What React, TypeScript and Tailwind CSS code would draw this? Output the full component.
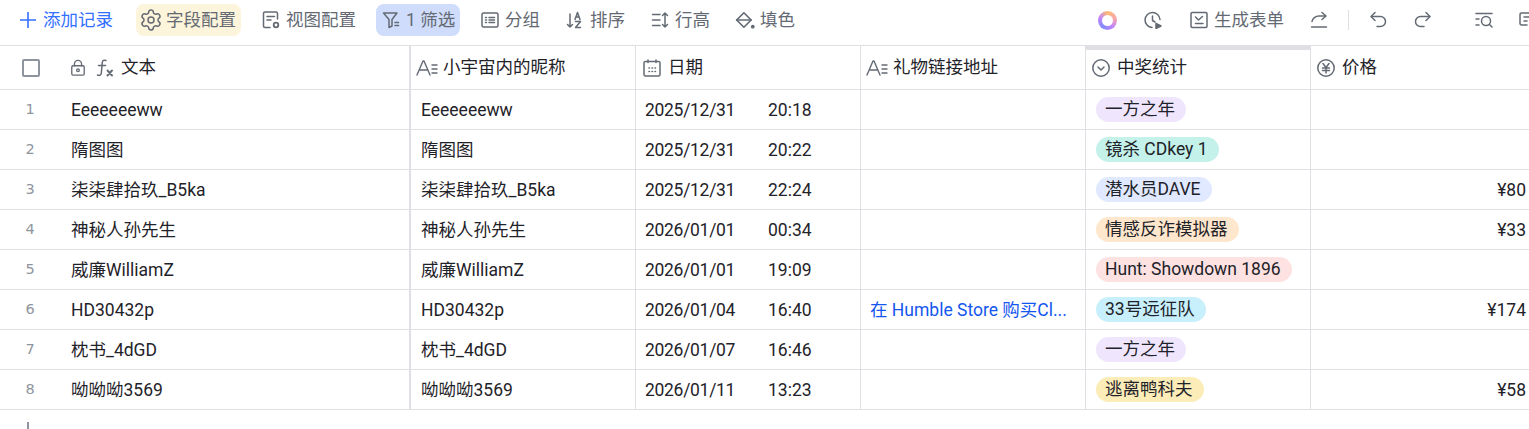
import type { ReactNode } from "react";
import { Settings } from "lucide-react";

type Row = { name: string; date: string; time: string; link?: string; prize: string; pill: string; price?: string };

const ROWS: Row[] = [
  { name: "Eeeeeeeww", date: "2025/12/31", time: "20:18", prize: "一方之年", pill: "bg-[#efe6fe]" },
  { name: "隋图图", date: "2025/12/31", time: "20:22", prize: "镜杀 CDkey 1", pill: "bg-[#c4f2eb]" },
  { name: "柒柒肆拾玖_B5ka", date: "2025/12/31", time: "22:24", prize: "潜水员DAVE", pill: "bg-[#e0e9ff]", price: "¥80" },
  { name: "神秘人孙先生", date: "2026/01/01", time: "00:34", prize: "情感反诈模拟器", pill: "bg-[#fee7cd]", price: "¥33" },
  { name: "威廉WilliamZ", date: "2026/01/01", time: "19:09", prize: "Hunt: Showdown 1896", pill: "bg-[#fee2e2]" },
  { name: "HD30432p", date: "2026/01/04", time: "16:40", link: "在 Humble Store 购买Cl...", prize: "33号远征队", pill: "bg-[#c8effc]", price: "¥174" },
  { name: "枕书_4dGD", date: "2026/01/07", time: "16:46", prize: "一方之年", pill: "bg-[#efe6fe]" },
  { name: "呦呦呦3569", date: "2026/01/11", time: "13:23", prize: "逃离鸭科夫", pill: "bg-[#fcecb8]", price: "¥58" },
];

function Ico({ children, className = "h-[18px] w-[18px]" }: { children: ReactNode; className?: string }) {
  return (
    <svg viewBox="0 0 18 18" fill="none" stroke="#646a73" strokeWidth="1.5" strokeLinecap="round" strokeLinejoin="round" className={`shrink-0 ${className}`}>
      {children}
    </svg>
  );
}

function ToolBtn({ icon, label, className = "" }: { icon: ReactNode; label: string; className?: string }) {
  return (
    <div className={`flex h-8 items-center gap-[6px] rounded-lg px-[6px] text-[#646a73] ${className}`}>
      {icon}
      <span className="whitespace-nowrap">{label}</span>
    </div>
  );
}

const TextFieldIcon = () => (
  <svg viewBox="0 0 22 18" fill="none" stroke="#646a73" strokeWidth="1.4" strokeLinecap="round" strokeLinejoin="round" className="h-[18px] w-[22px] shrink-0">
    <path d="M1 16 7 2h1l6 14M3.500 11h8.500" />
    <path d="M16 6h5M16 10h5M16 14h5" />
  </svg>
);

function App() {
  return (
    <div className="h-[429px] w-[1529px] overflow-hidden bg-white text-[17.5px] text-[#1f2329] [font-family:Roboto,'Noto_Sans_CJK_SC',sans-serif]">
      {/* toolbar */}
      <div className="flex h-[45px] items-start pt-1">
        <div className="flex w-[1085px] shrink-0 items-center">
          <div className="ml-5 mr-[23px] flex h-8 items-center gap-[7px] text-[#3370ff]">
            <svg viewBox="0 0 16 16" fill="none" stroke="#3370ff" strokeWidth="1.600" className="h-4 w-4">
              <path d="M8 0v16M0 8h16" />
            </svg>
            <span>添加记录</span>
          </div>
          <ToolBtn
            className="mr-[15px] w-[105px] bg-[#fdf4dc]"
            icon={<Settings size={24} strokeWidth={1.5} color="#646a73" className="-m-[3px] shrink-0" />}
            label="字段配置"
          />
          <ToolBtn
            className="mr-[14px] w-[106px]"
            icon={
              <Ico>
                <path d="M8 16.500H3A1.500 1.500 0 0 1 1.500 15V2.500A1.500 1.500 0 0 1 3 1h11a1.500 1.500 0 0 1 1.500 1.500V8" />
                <path d="M5 5.500h7.500M5 9h4" />
                <circle cx="14" cy="14" r="2.300" strokeWidth="1.800" />
              </Ico>
            }
            label="视图配置"
          />
          <ToolBtn
            className="mr-[15px] w-[84px] bg-[#cfdcfb]"
            icon={
              <Ico>
                <path d="M1.500 2h13.500L10 8.500V15l-3 1.500v-8z" />
                <path d="M13 11.500h3.500M13 14.500h3.500" />
              </Ico>
            }
            label="1 筛选"
          />
          <ToolBtn
            className="mr-[14px] w-[71px]"
            icon={
              <Ico>
                <rect x="1" y="2" width="16" height="14" rx="1.500" />
                <path d="M4.500 6.500h1M8 6.500h5.500M4.500 9h1M8 9h5.500M4.500 11.500h1M8 11.500h5.500" />
              </Ico>
            }
            label="分组"
          />
          <ToolBtn
            className="mr-[13px] w-[72px]"
            icon={
              <Ico>
                <path d="M4 3v13M1.500 13.500 4 16l2.500-2.500" />
                <path d="M9 8.500 11.500 1.500 14 8.500M10 6h3M9.500 10.500h5L9.500 16.500h5" />
              </Ico>
            }
            label="排序"
          />
          <ToolBtn
            className="mr-3 w-[72px]"
            icon={
              <Ico>
                <path d="M1.500 3.500h7.500M1.500 9h7.500M1.500 14.500h7.500" />
                <path d="M14 2v14M11.500 4.500 14 2l2.500 2.500M11.500 13.500 14 16l2.500-2.500" />
              </Ico>
            }
            label="行高"
          />
          <div className="flex h-8 items-center gap-[5px] px-[6px] text-[#646a73]">
            <Ico className="h-[20px] w-[20px]">
              <path d="M1.500 9 8 2.500 14.500 9 8 15.500z" />
              <path d="M1.500 9h13" />
              <circle cx="16" cy="15" r="1.700" fill="#646a73" stroke="none" />
            </Ico>
            <span>填色</span>
          </div>
        </div>
        <div className="flex h-8 shrink-0 items-center pl-[13px]">
          <div className="h-[19px] w-[19px] rounded-full bg-[conic-gradient(#fdba74,#f9a8a8,#c084fc,#818cf8,#c084fc,#fdba74)] p-1">
            <div className="h-full w-full rounded-full bg-white" />
          </div>
          <div className="ml-[27px]">
            <Ico>
              <path d="M8 16.500A7.500 7.500 0 1 1 16 8.500" />
              <path d="M8.500 5v4.500l2.500 1.500" />
              <path d="M12 12.500l5 2.500-5 2.500z" fill="#646a73" />
            </Ico>
          </div>
          <div className="ml-[28px] flex items-center gap-[6px] text-[#646a73]">
            <Ico>
              <rect x="1" y="1.500" width="16" height="15" rx="1.200" />
              <path d="m5.500 6 3 3 4-3.500M5.500 12.500h7.500" />
            </Ico>
            <span className="whitespace-nowrap">生成表单</span>
          </div>
          <div className="ml-[26px]">
            <Ico>
              <path d="M2 10.500C2.500 7.500 5.500 5 9 5h6.500" />
              <path d="M12 1.500 16 5l-4 3.500" />
              <path d="M1.500 16h15" />
            </Ico>
          </div>
          <div className="ml-5 h-5 w-px bg-[#dee0e3]" />
          <div className="ml-5">
            <Ico>
              <path d="M6 1.500 2 5.500l4 4" />
              <path d="M2.500 5.500h9a5 5 0 0 1 0 10H8" />
            </Ico>
          </div>
          <div className="ml-[27px]">
            <Ico>
              <path d="M12 1.500l4 4-4 4" />
              <path d="M15.500 5.500h-9a5 5 0 0 0 0 10H10" />
            </Ico>
          </div>
          <div className="ml-[43px]">
            <Ico>
              <path d="M1 2.500h16M1 8h3M1 14h3" />
              <circle cx="11" cy="10" r="4.500" />
              <path d="m14.500 13.500 2.500 2.500" />
            </Ico>
          </div>
          <div className="ml-[26px]">
            <Ico>
              <path d="M16 8V3.500A1.500 1.500 0 0 0 14.500 2h-12A1.500 1.500 0 0 0 1 3.500v9A1.500 1.500 0 0 0 2.500 14H8" />
              <path d="M5 6h7M5 10h3" />
            </Ico>
          </div>
        </div>
      </div>

      {/* table */}
      <div className="w-[1536px]">
        <div className="grid h-[45px] grid-cols-[411px_225px_225px_225px_225px_225px] border-y border-[#dee0e3]">
          <div className="flex items-center border-r-2 border-[#dee0e3]">
            <div className="ml-[22px] h-[18px] w-[18px] rounded-[2px] border-2 border-[#8f959e]" />
            <div className="ml-[30px]">
              <Ico className="h-[18px] w-[16px]">
                <rect x="2" y="6.500" width="14" height="10.500" rx="1.500" />
                <path d="M5 6.500V4.500a4 4 0 0 1 8 0v2" />
                <circle cx="9" cy="11.500" r="1.500" />
              </Ico>
            </div>
            <div className="ml-[8px]">
              <svg viewBox="0 0 20 20" fill="none" stroke="#646a73" strokeWidth="1.500" strokeLinecap="round" className="h-5 w-5">
                <path d="M12 2.500c-2-.8-3.500 0-3.700 2L7.300 15c-.2 2-1.700 3-3.800 2" />
                <path d="M4.500 7.500h7" />
                <path d="m13.500 12.500 4.500 5M18 12.500l-4.500 5" strokeWidth="1.900" />
              </svg>
            </div>
            <span className="ml-[7px]">文本</span>
          </div>
          <div className="flex items-center gap-[5px] border-r border-[#dee0e3] pl-[5px]">
            <TextFieldIcon />
            <span className="whitespace-nowrap">小宇宙内的昵称</span>
          </div>
          <div className="flex items-center gap-[7px] border-r border-[#dee0e3] pl-[7px]">
            <Ico>
              <rect x="1" y="2.500" width="16" height="14.500" rx="1.500" />
              <path d="M5 1v2.500M13 1v2.500M6 9h.5M9 9h.5M12 9h.5M6 12.500h.5M9 12.500h.5M12 12.500h.5" />
            </Ico>
            <span>日期</span>
          </div>
          <div className="flex items-center gap-[5px] border-r border-[#dee0e3] pl-[5px]">
            <TextFieldIcon />
            <span className="whitespace-nowrap">礼物链接地址</span>
          </div>
          <div className="relative flex items-center gap-[7px] border-r border-[#dee0e3] pl-[6px]">
            <div className="absolute left-0 right-0 top-0 h-1 bg-[#dee0e3]" />
            <Ico>
              <circle cx="9" cy="9" r="8.200" />
              <path d="m6 8 3 3 3-3" />
            </Ico>
            <span>中奖统计</span>
          </div>
          <div className="flex items-center gap-[7px] pl-[6px]">
            <Ico>
              <circle cx="9" cy="9" r="8.200" />
              <path d="m6 4.500 3 4 3-4M5.500 9h7M5.500 11.500h7M9 8.500V14" />
            </Ico>
            <span>价格</span>
          </div>
        </div>

        {ROWS.map((row, i) => (
          <div key={i} className="grid h-10 grid-cols-[411px_225px_225px_225px_225px_225px] border-b border-[#dee0e3]">
            <div className="flex items-center border-r-2 border-[#dee0e3]">
              <span className="w-[60px] text-center font-['DejaVu_Sans'] text-[14.500px] text-[#8f959e]">{i + 1}</span>
              <span className="ml-[11px] whitespace-nowrap pt-0.5">{row.name}</span>
            </div>
            <div className="flex items-center border-r border-[#dee0e3] pl-[10px]">
              <span className="whitespace-nowrap pt-0.5">{row.name}</span>
            </div>
            <div className="flex items-center border-r border-[#dee0e3] pl-[9px]">
              <span className="w-[123px] pt-0.5 tracking-[-0.3px]">{row.date}</span>
              <span className="pt-0.5">{row.time}</span>
            </div>
            <div className="flex items-center border-r border-[#dee0e3] pl-[9px]">
              {row.link && <span className="whitespace-nowrap pt-0.5 text-[#1456f0]">{row.link}</span>}
            </div>
            <div className="flex items-center border-r border-[#dee0e3] pl-[10px]">
              <span className={`flex h-[25px] items-center whitespace-nowrap rounded-full pl-[9px] pr-[11px] ${row.pill}`}>{row.prize}</span>
            </div>
            <div className="flex items-center justify-end pr-[10px] pt-0.5">{row.price}</div>
          </div>
        ))}

        <div className="ml-[27px] mt-[12px] h-[8px] w-[2px] bg-[#8f959e]" />
      </div>
    </div>
  );
}

export default App;
